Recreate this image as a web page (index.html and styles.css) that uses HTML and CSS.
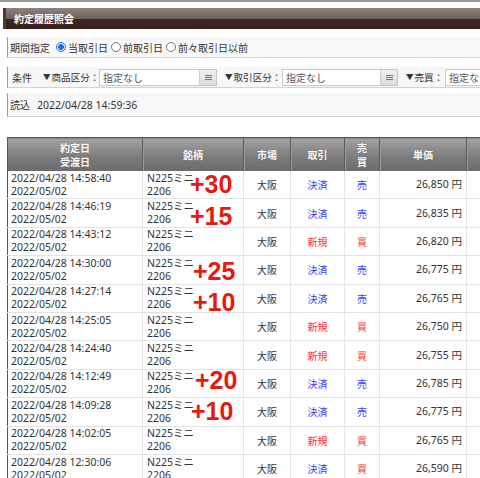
FILE: index.html
```html
<!DOCTYPE html>
<html lang="ja">
<head>
<meta charset="utf-8">
<title>約定履歴照会</title>
<link rel="stylesheet" href="styles.css">
</head>
<body>
<div class="topline"></div>
<div class="titlebar">約定履歴照会</div>

<div class="filter period">
  <span class="label">期間指定</span>
  <label class="radio"><span class="dot checked"></span>当取引日</label>
  <label class="radio"><span class="dot"></span>前取引日</label>
  <label class="radio"><span class="dot"></span>前々取引日以前</label>
</div>

<div class="filter cond">
  <span class="label l-cond">条件</span>
  <span class="field-label fl1"><span class="tri">▼</span>商品区分：</span>
  <span class="select s1"><span class="select-text">指定なし</span><span class="select-btn"><span class="bars"></span></span></span>
  <span class="field-label fl2"><span class="tri">▼</span>取引区分：</span>
  <span class="select s2"><span class="select-text">指定なし</span><span class="select-btn"><span class="bars"></span></span></span>
  <span class="field-label fl3"><span class="tri">▼</span>売買：</span>
  <span class="select s3"><span class="select-text">指定なし</span></span>
</div>

<div class="filter load">
  <span class="label">読込</span>
  <span class="load-time">2022/04/28 14:59:36</span>
</div>

<div class="table-wrap">
  <table class="hist">
    <colgroup>
      <col class="c1"><col class="c2"><col class="c3"><col class="c4"><col class="c5"><col class="c6"><col class="c7">
    </colgroup>
    <thead>
      <tr><th>約定日<br>受渡日</th><th>銘柄</th><th>市場</th><th>取引</th><th>売<br>買</th><th>単価</th><th></th></tr>
    </thead>
    <tbody>
      <tr><td class="date">2022/04/28 14:58:40<br>2022/05/02</td><td class="name">N225ミニ<br>2206</td><td class="ctr">大阪</td><td class="ctr blue">決済</td><td class="ctr blue">売</td><td class="price">26,850 円</td><td></td></tr>
      <tr><td class="date">2022/04/28 14:46:19<br>2022/05/02</td><td class="name">N225ミニ<br>2206</td><td class="ctr">大阪</td><td class="ctr blue">決済</td><td class="ctr blue">売</td><td class="price">26,835 円</td><td></td></tr>
      <tr><td class="date">2022/04/28 14:43:12<br>2022/05/02</td><td class="name">N225ミニ<br>2206</td><td class="ctr">大阪</td><td class="ctr red">新規</td><td class="ctr red">買</td><td class="price">26,820 円</td><td></td></tr>
      <tr><td class="date">2022/04/28 14:30:00<br>2022/05/02</td><td class="name">N225ミニ<br>2206</td><td class="ctr">大阪</td><td class="ctr blue">決済</td><td class="ctr blue">売</td><td class="price">26,775 円</td><td></td></tr>
      <tr><td class="date">2022/04/28 14:27:14<br>2022/05/02</td><td class="name">N225ミニ<br>2206</td><td class="ctr">大阪</td><td class="ctr blue">決済</td><td class="ctr blue">売</td><td class="price">26,765 円</td><td></td></tr>
      <tr><td class="date">2022/04/28 14:25:05<br>2022/05/02</td><td class="name">N225ミニ<br>2206</td><td class="ctr">大阪</td><td class="ctr red">新規</td><td class="ctr red">買</td><td class="price">26,750 円</td><td></td></tr>
      <tr><td class="date">2022/04/28 14:24:40<br>2022/05/02</td><td class="name">N225ミニ<br>2206</td><td class="ctr">大阪</td><td class="ctr red">新規</td><td class="ctr red">買</td><td class="price">26,755 円</td><td></td></tr>
      <tr><td class="date">2022/04/28 14:12:49<br>2022/05/02</td><td class="name">N225ミニ<br>2206</td><td class="ctr">大阪</td><td class="ctr blue">決済</td><td class="ctr blue">売</td><td class="price">26,785 円</td><td></td></tr>
      <tr><td class="date">2022/04/28 14:09:28<br>2022/05/02</td><td class="name">N225ミニ<br>2206</td><td class="ctr">大阪</td><td class="ctr blue">決済</td><td class="ctr blue">売</td><td class="price">26,775 円</td><td></td></tr>
      <tr><td class="date">2022/04/28 14:02:05<br>2022/05/02</td><td class="name">N225ミニ<br>2206</td><td class="ctr">大阪</td><td class="ctr red">新規</td><td class="ctr red">買</td><td class="price">26,765 円</td><td></td></tr>
      <tr><td class="date">2022/04/28 12:30:06<br>2022/05/02</td><td class="name">N225ミニ<br>2206</td><td class="ctr">大阪</td><td class="ctr blue">決済</td><td class="ctr red">買</td><td class="price">26,590 円</td><td></td></tr>
    </tbody>
  </table>
  <span class="note n1">+30</span>
  <span class="note n2">+15</span>
  <span class="note n3">+25</span>
  <span class="note n4">+10</span>
  <span class="note n5">+20</span>
  <span class="note n6">+10</span>
</div>
</body>
</html>
```

FILE: styles.css
```css
html, body {
  margin: 0;
  padding: 0;
  overflow: hidden;
  background: #fff;
}
body {
  width: 480px;
  height: 478px;
  font-family: "Noto Sans", "Noto Sans CJK JP", sans-serif;
  font-size: 10.5px;
  color: #333;
}
.topline {
  height: 2px;
  background: #9a9a9a;
}
.titlebar {
  margin: 6px 0 0 3px;
  height: 21px;
  line-height: 21px;
  padding-left: 8px;
  border-left: 3px solid #4b3b37;
  color: #fff;
  font-weight: bold;
  font-size: 10px;
  font-family: "Noto Sans CJK JP", sans-serif;
  background: linear-gradient(#8e8381 0%, #6f5f5b 50%, #3f2722 52%, #3a211c 100%);
  white-space: nowrap;
}
.filter {
  margin-left: 7px;
  display: flex;
  align-items: center;
  white-space: nowrap;
  border-left: 1px solid #9a9a9a;
  border-bottom: 1px solid #d2d2d2;
  background: #f8f8f8;
  font-family: "Noto Sans CJK JP", sans-serif;
  font-size: 10px;
}
.filter > * { flex: none; }
.period {
  margin-top: 8px;
  height: 20px;
  padding-left: 2px;
}
.period .label { margin-right: 6px; }
.radio {
  display: flex;
  align-items: center;
  margin-right: 3px;
}
.dot {
  width: 8px;
  height: 8px;
  border: 1px solid #777;
  border-radius: 50%;
  background: #fff;
  margin-right: 2px;
  box-sizing: content-box;
}
.dot.checked {
  border-color: #1a6fe0;
  background: radial-gradient(circle, #1a6fe0 0 2.6px, #fff 3.2px);
}
.cond {
  margin-top: 9px;
  height: 20px;
  padding-left: 4px;
  background: #f7f7f7;
}
.l-cond { width: 31px; }
.field-label { font-size: 9.6px; overflow: hidden; }
.tri { font-size: 7.5px; margin-right: 1px; vertical-align: 1px; }
.fl1 { width: 56px; }
.fl2 { width: 57px; margin-left: 8px; }
.fl3 { width: 39px; margin-left: 8px; }
.select {
  display: flex;
  height: 17px;
  box-sizing: border-box;
  border: 1px solid #c8c8c8;
  background: #fff;
}
.select-text {
  padding-left: 3px;
  box-sizing: border-box;
  line-height: 15px;
  color: #555;
}
.s1 .select-text { width: 99px; }
.s2 .select-text { width: 97px; }
.s3 .select-text { width: 60px; }
.select-btn {
  width: 16px;
  border-left: 1px solid #d0d0d0;
  background: linear-gradient(#efefef, #dcdcdc);
  display: flex;
  align-items: center;
  justify-content: center;
}
.bars {
  width: 7px;
  height: 5px;
  border-top: 1px solid #777;
  border-bottom: 1px solid #777;
  position: relative;
  box-sizing: border-box;
}
.bars::after {
  content: "";
  position: absolute;
  left: 0;
  right: 0;
  top: 1px;
  height: 1px;
  background: #777;
}
.load {
  margin-top: 5px;
  height: 23px;
  padding-left: 2px;
}
.load .label { margin-right: 7px; }
.load-time {
  font-family: "Noto Sans", sans-serif;
  font-size: 10.5px;
}
.table-wrap {
  position: relative;
  margin-top: 20px;
  margin-left: 7px;
}
.hist {
  border-collapse: collapse;
  table-layout: fixed;
  width: 540px;
  border-left: 1px solid #555;
}
.c1 { width: 135px; }
.c2 { width: 101px; }
.c3 { width: 47px; }
.c4 { width: 54px; }
.c5 { width: 35px; }
.c6 { width: 87px; }
.c7 { width: 81px; }
.hist th {
  height: 32px;
  padding: 1px 0 0;
  color: #fff;
  font-weight: bold;
  font-family: "Noto Sans CJK JP", sans-serif;
  font-size: 10px;
  line-height: 14px;
  text-shadow: 0 0 1px rgba(0,0,0,0.35);
  background: linear-gradient(#a3a3a3, #7a7a7a 60%, #6b6b6b);
  border-top: 1px solid #5a5a5a;
  border-left: 1px solid #5c5c5c;
  box-shadow: inset 1px 0 0 #9b9b9b;
}
.hist th:first-child { border-left: none; box-shadow: none; }
.hist td {
  height: 27.4px;
  padding: 0;
  line-height: 13px;
  border-bottom: 1px solid #e2e2e2;
  border-left: 1px solid #e6e6e6;
  vertical-align: middle;
  white-space: nowrap;
  font-family: "Noto Sans", "Noto Sans CJK JP", sans-serif;
}
.hist td:first-child { border-left: none; }
.date { padding-left: 3px !important; }
.name { padding-left: 4px !important; }
.ctr { text-align: center; font-family: "Noto Sans CJK JP", sans-serif !important; font-size: 10px; }
.blue { color: #3a3aff; }
.red { color: #ff3030; }
.price { text-align: right; padding-right: 4px !important; }
.note {
  position: absolute;
  font-family: "Liberation Sans", Arial, sans-serif;
  font-weight: bold;
  font-size: 25px;
  line-height: 25px;
  color: #e51b10;
  white-space: nowrap;
}
.n1 { left: 183px; top: 35px; }
.n2 { left: 183px; top: 67px; }
.n3 { left: 186px; top: 122px; }
.n4 { left: 186px; top: 153px; }
.n5 { left: 188px; top: 231px; }
.n6 { left: 184px; top: 262px; }
```
